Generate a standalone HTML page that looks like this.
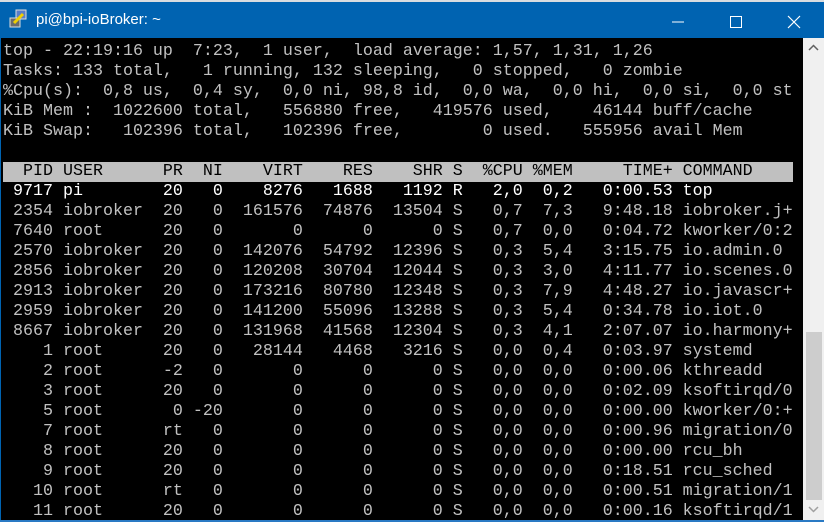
<!DOCTYPE html>
<html><head><meta charset="utf-8"><style>
*{margin:0;padding:0}
body{width:824px;height:522px;overflow:hidden;background:#000;position:relative;font-family:"Liberation Sans",sans-serif}
#tb{position:absolute;left:0;top:0;width:824px;height:38px;background:#0063b1;border-top:2px solid #d8dce0;box-sizing:border-box}
#title{position:absolute;left:36px;top:9px;color:#fff;font-size:15px}
#term{position:absolute;left:1px;top:38px;width:802px;height:482px;background:#000;overflow:hidden}
pre{font-family:"Liberation Mono",monospace;font-size:16.67px;line-height:20px;color:#c0c0c0;padding:4px 0 0 2px;white-space:pre}
.h{background:#c0c0c0;color:#000;display:inline-block;width:790px}
.b{color:#fff}
#sb{position:absolute;left:803px;top:38px;width:21px;height:482px;background:#f0f0f0}
#thumb{position:absolute;left:3px;top:294px;width:16px;height:168px;background:#cdcdcd}
#lb{position:absolute;left:0;top:38px;width:1px;height:484px;background:#0063b1}
#bb{position:absolute;left:0;top:520px;width:824px;height:2px;background:#2a7ac4}
</style></head><body>
<div id="tb">
<svg style="position:absolute;left:9px;top:7px" width="20" height="20" viewBox="0 0 20 20"><rect x="7" y="1" width="10" height="9" fill="#5a7ec8" stroke="#ddd"/><rect x="1" y="9" width="10" height="9" fill="#6b6b6b" stroke="#ddd"/><path d="M5 14 L14 5" stroke="#f0d000" stroke-width="3"/></svg>
<div id="title">pi@bpi-ioBroker: ~</div>
<svg style="position:absolute;left:670px;top:8px" width="150" height="24"><path d="M2 12H14" stroke="#fff" stroke-width="1"/><rect x="60.5" y="6.5" width="11" height="11" fill="none" stroke="#fff"/><path d="M118 6L130 18M130 6L118 18" stroke="#fff" stroke-width="1.2"/></svg>
</div>
<div id="lb"></div>
<div id="term"><pre>top - 22:19:16 up  7:23,  1 user,  load average: 1,57, 1,31, 1,26
Tasks: 133 total,   1 running, 132 sleeping,   0 stopped,   0 zombie
%Cpu(s):  0,8 us,  0,4 sy,  0,0 ni, 98,8 id,  0,0 wa,  0,0 hi,  0,0 si,  0,0 st
KiB Mem :  1022600 total,   556880 free,   419576 used,    46144 buff/cache
KiB Swap:   102396 total,   102396 free,        0 used.   555956 avail Mem

<span class="h">  PID USER      PR  NI    VIRT    RES    SHR S  %CPU %MEM     TIME+ COMMAND</span>
<span class="b"> 9717 pi        20   0    8276   1688   1192 R   2,0  0,2   0:00.53 top</span>
 2354 iobroker  20   0  161576  74876  13504 S   0,7  7,3   9:48.18 iobroker.j+
 7640 root      20   0       0      0      0 S   0,7  0,0   0:04.72 kworker/0:2
 2570 iobroker  20   0  142076  54792  12396 S   0,3  5,4   3:15.75 io.admin.0
 2856 iobroker  20   0  120208  30704  12044 S   0,3  3,0   4:11.77 io.scenes.0
 2913 iobroker  20   0  173216  80780  12348 S   0,3  7,9   4:48.27 io.javascr+
 2959 iobroker  20   0  141200  55096  13288 S   0,3  5,4   0:34.78 io.iot.0
 8667 iobroker  20   0  131968  41568  12304 S   0,3  4,1   2:07.07 io.harmony+
    1 root      20   0   28144   4468   3216 S   0,0  0,4   0:03.97 systemd
    2 root      -2   0       0      0      0 S   0,0  0,0   0:00.06 kthreadd
    3 root      20   0       0      0      0 S   0,0  0,0   0:02.09 ksoftirqd/0
    5 root       0 -20       0      0      0 S   0,0  0,0   0:00.00 kworker/0:+
    7 root      rt   0       0      0      0 S   0,0  0,0   0:00.96 migration/0
    8 root      20   0       0      0      0 S   0,0  0,0   0:00.00 rcu_bh
    9 root      20   0       0      0      0 S   0,0  0,0   0:18.51 rcu_sched
   10 root      rt   0       0      0      0 S   0,0  0,0   0:00.51 migration/1
   11 root      20   0       0      0      0 S   0,0  0,0   0:00.16 ksoftirqd/1</pre></div>
<div id="sb"><svg style="position:absolute;left:5px;top:6px" width="11" height="8"><path d="M1 6L5.5 1.5L10 6" fill="none" stroke="#606060" stroke-width="1.5"/></svg><div id="thumb"></div><svg style="position:absolute;left:5px;top:467px" width="11" height="8"><path d="M1 2L5.5 6.5L10 2" fill="none" stroke="#a0a0a0" stroke-width="1.5"/></svg></div>
<div id="bb"></div>
</body></html>
